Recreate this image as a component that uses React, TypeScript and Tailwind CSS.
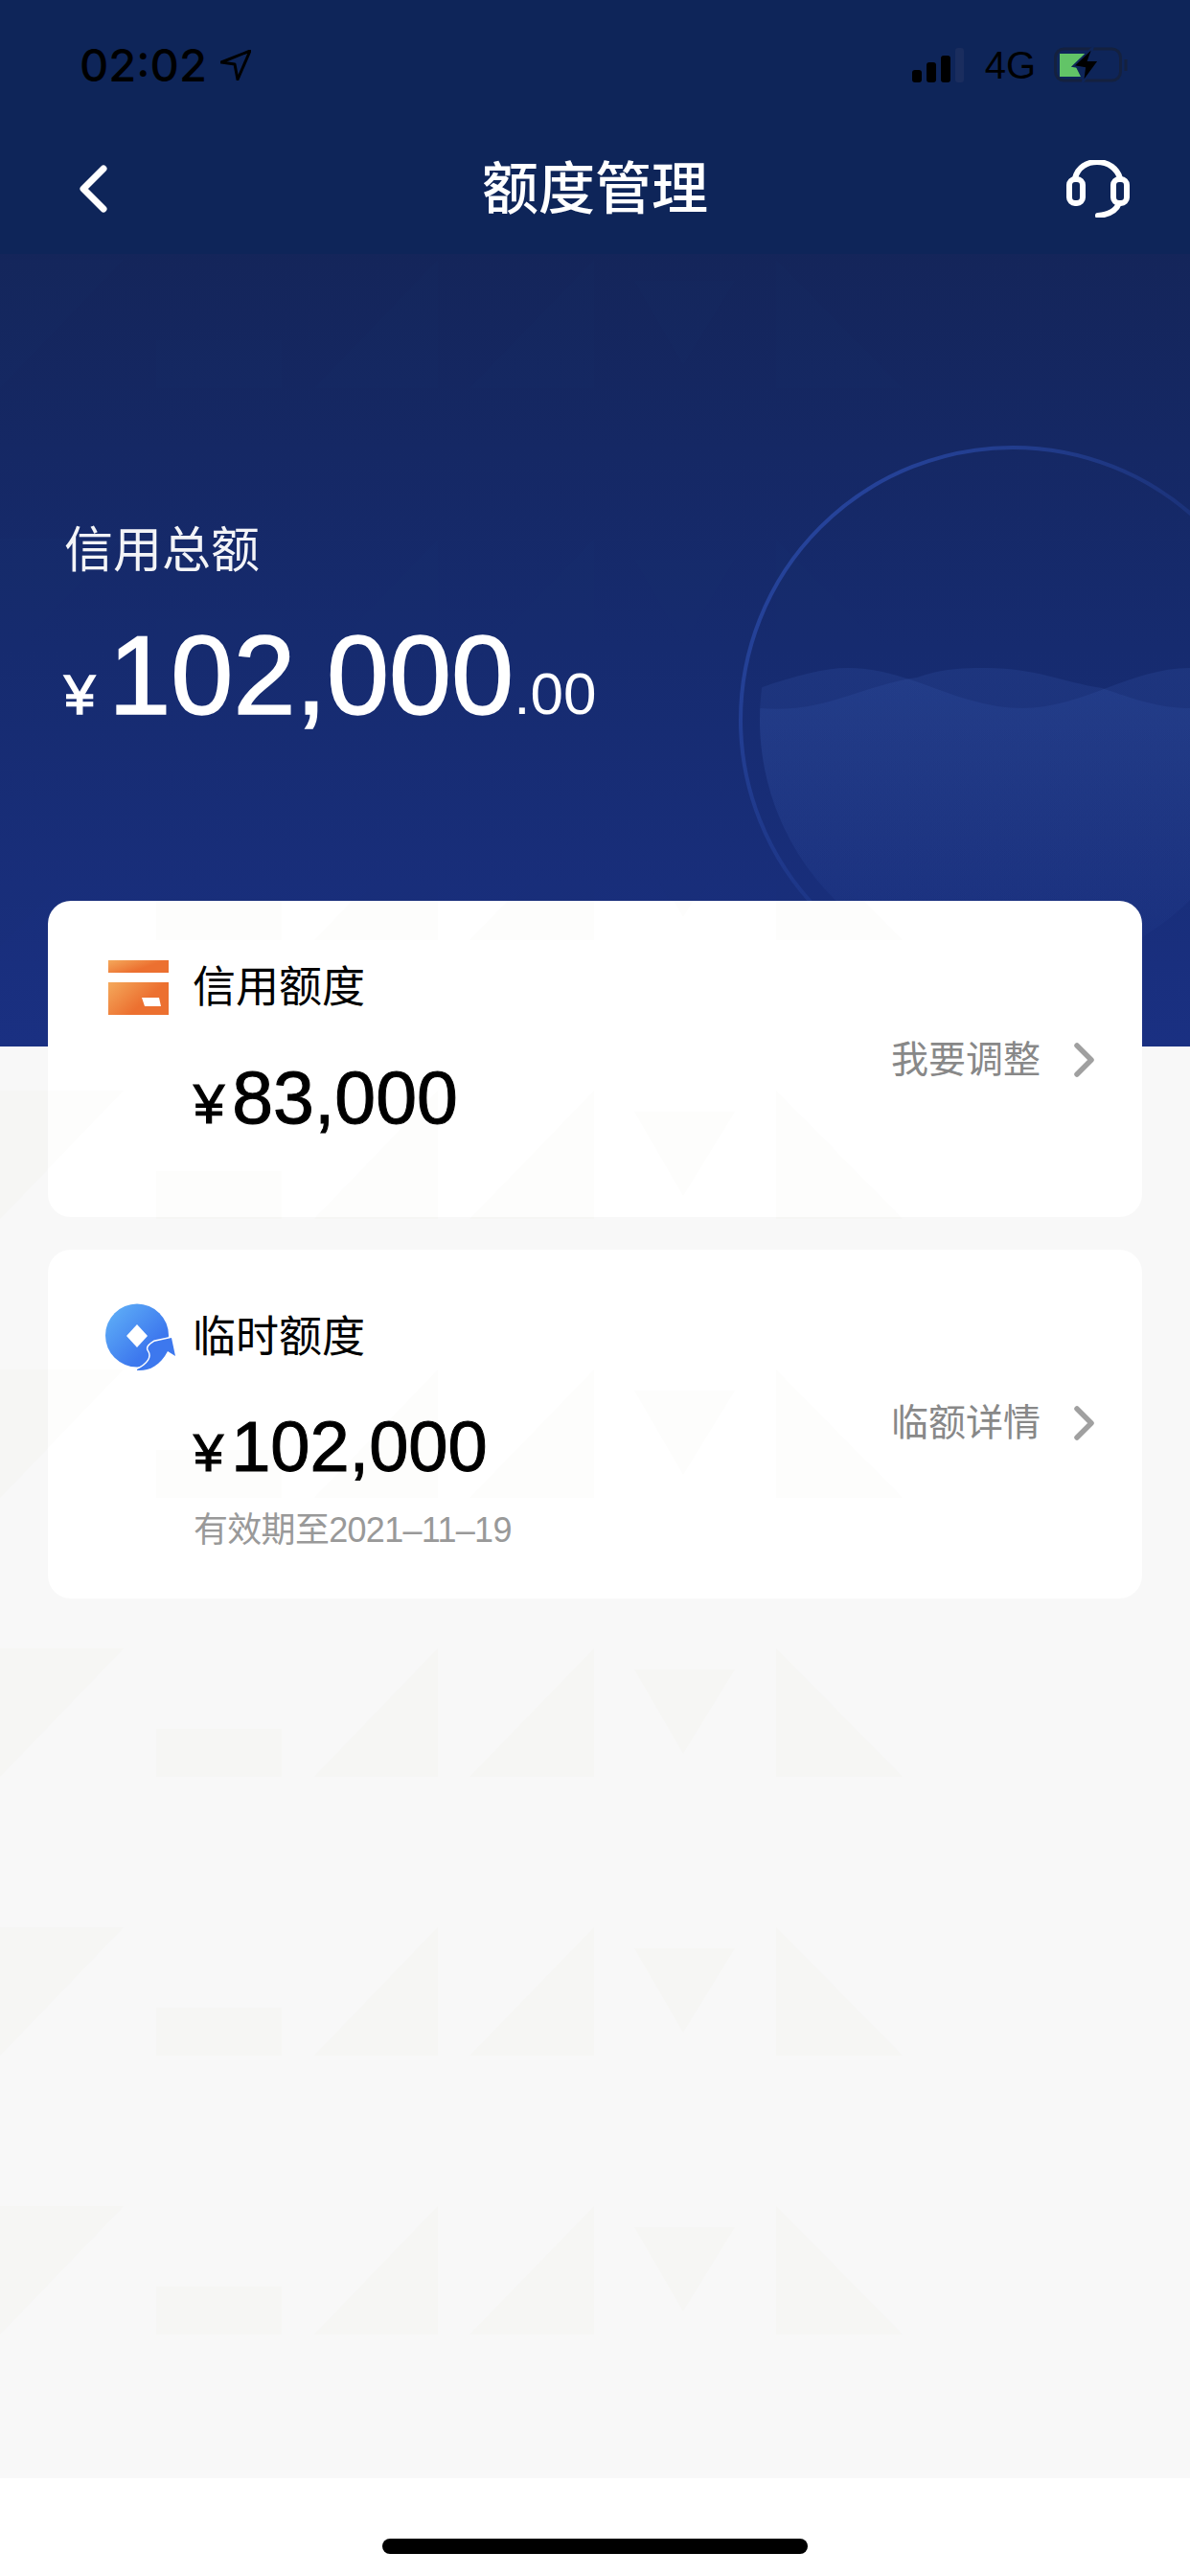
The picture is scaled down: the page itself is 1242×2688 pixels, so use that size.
const sans = 'font-["Liberation_Sans","Noto_Sans_CJK_SC",sans-serif]';

// one row of the pale triangles, repeated down the page
function PatternRow({ y }: { y: number }) {
  return (
    <g transform={`translate(0 ${y})`}>
      <path d="M0 0H129L0 134Z" />
      <path d="M163 84H294V134H163Z" />
      <path d="M457 0V134H328Z" />
      <path d="M620 0V134H490Z" />
      <path d="M662 22H767L713 110Z" />
      <path d="M810 0L942 134H810Z" />
    </g>
  );
}

function Pattern({ className }: { className: string }) {
  const rows = [265, 556, 847, 1138, 1429, 1720, 2011, 2302];
  return (
    <svg width="1242" height="2688" viewBox="0 0 1242 2688" className={className}>
      {rows.map((y) => (
        <PatternRow key={y} y={y} />
      ))}
    </svg>
  );
}

function Chevron() {
  return (
    <svg width="24" height="36" viewBox="0 0 24 36" fill="none" stroke="#a0a0a0" strokeWidth="5.5" strokeLinecap="round" strokeLinejoin="round">
      <path d="M4 3L19 18L4 33" />
    </svg>
  );
}

function CardIcon() {
  return (
    <svg width="63" height="57" viewBox="0 0 63 57">
      <defs>
        <linearGradient id="cardOrange" x1="0" y1="0" x2="1" y2="0.6">
          <stop offset="0" stopColor="#f4a95c" />
          <stop offset="0.7" stopColor="#ec7030" />
        </linearGradient>
      </defs>
      <rect x="0" y="0" width="63" height="13" fill="url(#cardOrange)" />
      <rect x="0" y="23" width="63" height="34" fill="url(#cardOrange)" />
      <path d="M35 39H53L55 48H38Z" fill="#fff" />
    </svg>
  );
}

function TempIcon() {
  return (
    <svg width="74" height="72" viewBox="0 0 74 72">
      <defs>
        <linearGradient id="tempBlue" x1="0" y1="0" x2="1" y2="1">
          <stop offset="0" stopColor="#62b4f8" />
          <stop offset="0.7" stopColor="#3d78ee" />
        </linearGradient>
      </defs>
      <circle cx="33" cy="33.5" r="33" fill="url(#tempBlue)" />
      <path d="M33 22L44 34L33 46L22 34Z" fill="#fff" />
      <path
        d="M33 70C44 71 57 66 65 50L73 55L69 36L51 40C46 43 43 46 45 49C50 56 44 64 33 69Z"
        fill="#3d78ee"
        stroke="#fff"
        strokeWidth="3"
        paintOrder="stroke"
      />
    </svg>
  );
}

export default function App() {
  return (
    <div className={`relative flex h-[2688px] w-[1242px] flex-col overflow-hidden bg-[#f8f8f8] ${sans}`}>
      <Pattern className="absolute left-0 top-0 fill-[#f6f6f4]" />

      {/* hero */}
      <div className="relative h-[1092px] overflow-hidden bg-gradient-to-b from-[#14255a] from-[24%] via-[#162b6f] via-[62%] to-[#1a3082]">
        <Pattern className="absolute left-0 top-[6px] fill-[#1f3a7a] opacity-[0.06]" />
        <svg width="502" height="827" viewBox="740 265 502 827" className="absolute left-[740px] top-[265px]">
          <defs>
            <clipPath id="inner">
              <circle cx="1057" cy="751" r="264" />
            </clipPath>
            <linearGradient id="ring" x1="0" y1="0" x2="1" y2="1">
              <stop offset="0" stopColor="#2a4aa8" />
              <stop offset="0.35" stopColor="#2a4aa8" stopOpacity="0.45" />
              <stop offset="0.7" stopColor="#2a4aa8" stopOpacity="0" />
            </linearGradient>
            <linearGradient id="waterFill" gradientUnits="userSpaceOnUse" x1="0" y1="697" x2="0" y2="1020">
              <stop offset="0" stopColor="#3a5cb4" stopOpacity="0.2" />
              <stop offset="1" stopColor="#3a5cb4" stopOpacity="0" />
            </linearGradient>
          </defs>
          <circle cx="1057" cy="751" r="284" fill="none" stroke="url(#ring)" strokeWidth="4" />
          <g clipPath="url(#inner)">
            <path d="M793 718C830 705 860 697 885 697C950 697 1000 739 1067 739C1130 739 1180 697 1242 697V1092H793Z" fill="url(#waterFill)" />
            <path d="M793 739C860 745 900 715 957 707C985 697 1010 697 1030 697C1080 697 1110 712 1150 718C1185 730 1210 739 1242 739V1092H793Z" fill="url(#waterFill)" />
          </g>
        </svg>

        <div className="relative flex h-[265px] flex-col bg-[#0e2559]">
          <div className="flex h-[135px] items-start justify-between pl-[83px] pr-[64px] pt-[44px]">
            <div className="flex items-center gap-[14px]">
              <span className="font-['Inter'] text-[47px] font-medium leading-[48px] text-black">02:02</span>
              <svg width="32" height="32" viewBox="0 0 32 32" fill="none" stroke="#000" strokeWidth="3" strokeLinejoin="round">
                <path d="M1 13L31 1L18 31L15 15Z" />
              </svg>
            </div>
            <div className="flex items-center gap-[19px] pt-[4px]">
              <svg width="54" height="36" viewBox="0 0 54 36" className="mr-[3px]">
                <rect x="0" y="23" width="10" height="13" rx="3" />
                <rect x="15" y="15" width="10" height="21" rx="3" />
                <rect x="30" y="8" width="10" height="28" rx="3" />
                <rect x="45" y="0" width="9" height="36" rx="3" fill="#1a2d5e" />
              </svg>
              <span className="text-[40px] leading-[40px] text-black">4G</span>
              <svg width="78" height="40" viewBox="0 0 78 40" fill="none">
                <rect x="1.5" y="3" width="68" height="33" rx="9" stroke="#14213f" strokeWidth="3" />
                <path d="M6 8H33L22 20L28 32H6Z" fill="#62c467" />
                <path d="M75 14V26" stroke="#14213f" strokeWidth="3" />
                <path d="M41 1L20 21L32 23L30 38L47 15L36 15Z" fill="#000" stroke="#0e2559" strokeWidth="2" />
              </svg>
            </div>
          </div>
          <div className="flex h-[124px] items-center justify-between">
            <div className="w-[200px] pl-[82px]">
              <svg width="30" height="50" viewBox="0 0 30 50" fill="none" stroke="#fff" strokeWidth="7" strokeLinecap="round" strokeLinejoin="round" className="block">
                <path d="M26 4L5 25L26 46" />
              </svg>
            </div>
            <h1 className="pt-[3px] text-[59px] font-medium leading-none text-white">额度管理</h1>
            <div className="flex w-[200px] justify-end pr-[63px]">
              <svg width="66" height="60" viewBox="0 0 66 60" fill="none" stroke="#fff" strokeWidth="6" strokeLinecap="round">
                <path d="M9 19C12 7 22 2 32 2C44 2 53 9 56 19" />
                <rect x="3" y="20" width="14" height="25" rx="6" />
                <rect x="49" y="20" width="14" height="25" rx="6" />
                <path d="M55 45C52 53 44 57 33 58" />
              </svg>
            </div>
          </div>
        </div>

        <div className="relative px-[67px] pt-[281px]">
          <div className="text-[51px] leading-[58px] text-white/95">信用总额</div>
          <div className="mt-[43px] flex items-baseline text-white">
            <span className="text-[58px] leading-none [-webkit-text-stroke:1.5px_white]">¥</span>
            <span className="ml-[14px] text-[117px] leading-[116px] [-webkit-text-stroke:1.5px_white]">102,000</span>
            <span className="text-[62px] leading-none">.00</span>
          </div>
        </div>
      </div>

      {/* quota cards, they overlap the bottom of the hero */}
      <div className="relative mt-[-152px] flex flex-col gap-[34px] px-[50px]">
        <div className="relative h-[330px] overflow-hidden rounded-[24px] bg-white">
          <Pattern className="absolute left-[-50px] top-[-940px] fill-[#fdfdfc]" />
          <div className="relative flex h-full items-start justify-between pl-[63px] pr-[48px]">
            <div>
              <div className="flex items-center gap-[25px] pt-[62px]">
                <CardIcon />
                <span className="text-[45px] leading-[56px] text-black">信用额度</span>
              </div>
              <div className="mt-[48px] flex items-baseline pl-[89px] text-black">
                <span className="text-[58px] leading-none [-webkit-text-stroke:1.2px_black]">¥</span>
                <span className="ml-[8px] text-[77px] leading-none [-webkit-text-stroke:1px_black]">83,000</span>
              </div>
            </div>
            <div className="flex items-center gap-[34px] pt-[141px]">
              <span className="text-[39px] leading-[50px] text-[#888]">我要调整</span>
              <Chevron />
            </div>
          </div>
        </div>

        <div className="relative h-[364px] overflow-hidden rounded-[24px] bg-white">
          <Pattern className="absolute left-[-50px] top-[-1304px] fill-[#fdfdfc]" />
          <div className="relative flex h-full items-start justify-between pl-[60px] pr-[48px]">
            <div>
              <div className="flex items-center gap-[17px] pt-[56px]">
                <TempIcon />
                <span className="text-[45px] leading-[56px] text-black">临时额度</span>
              </div>
              <div className="mt-[41px] flex items-baseline pl-[92px] text-black">
                <span className="text-[56px] leading-none [-webkit-text-stroke:1.2px_black]">¥</span>
                <span className="ml-[8px] text-[74px] leading-none [-webkit-text-stroke:1px_black]">102,000</span>
              </div>
              <div className="mt-[28px] pl-[92px] text-[36px] leading-[44px] tracking-[-0.7px] text-[#999]">有效期至2021–11–19</div>
            </div>
            <div className="flex items-center gap-[34px] pt-[156px]">
              <span className="text-[39px] leading-[50px] text-[#888]">临额详情</span>
              <Chevron />
            </div>
          </div>
        </div>
      </div>

      {/* home indicator */}
      <div className="absolute bottom-0 left-0 right-0 flex h-[102px] justify-center bg-white pt-[63px]">
        <div className="h-[16px] w-[444px] rounded-full bg-black" />
      </div>
    </div>
  );
}
